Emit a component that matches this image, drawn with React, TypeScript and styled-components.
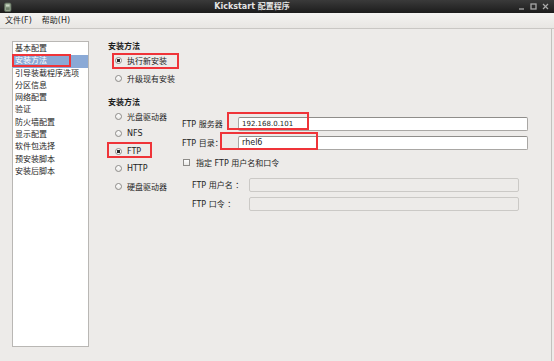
import React from "react";
import styled, { createGlobalStyle } from "styled-components";

const GlobalStyle = createGlobalStyle`
  html, body {
    margin: 0;
    padding: 0;
    background: #edebe9;
  }
  body {
    font-family: "DejaVu Sans", "Noto Sans CJK SC", sans-serif;
    font-size: 8px;
    color: #1e1e1e;
  }
  * {
    box-sizing: border-box;
  }
`;

const Window = styled.div`
  position: relative;
  width: 554px;
  height: 361px;
  display: flex;
  flex-direction: column;
  background: #edebe9;
  overflow: hidden;
`;

const TitleBar = styled.div`
  height: 13px;
  display: flex;
  align-items: center;
  padding: 0 5px 0 4px;
  background: linear-gradient(#3a3a3a, #1c1c1c);
`;

const TitleText = styled.div`
  flex: 1;
  text-align: center;
  padding-right: 26px;
  color: #e4e4e4;
  font-weight: bold;
  font-size: 8px;
  line-height: 13px;
  white-space: nowrap;
`;

const WinButtons = styled.div`
  display: flex;
  align-items: center;
  gap: 5px;
`;

const MenuBar = styled.div`
  height: 16px;
  display: flex;
  align-items: center;
  gap: 10px;
  padding-left: 5px;
  background: linear-gradient(#f4f3f1, #e8e6e3);
  border-bottom: 1px solid #c9c7c4;
`;

const MenuItem = styled.span`
  line-height: 15px;
  white-space: nowrap;
`;

const Body = styled.div`
  flex: 1;
  display: flex;
  align-items: flex-start;
  padding: 12px 0 0 12px;
  margin-right: 2px;
  border-right: 1px solid #c3c1be;
`;

const Sidebar = styled.div`
  width: 77px;
  height: 306px;
  padding-top: 1px;
  background: #fff;
  border: 1px solid #b9b7b4;
`;

const SideItem = styled.div<{ $active?: boolean }>`
  height: 12.3px;
  line-height: 12.3px;
  padding-left: 2px;
  white-space: nowrap;
  background: ${(p) => (p.$active ? "#8aa9d6" : "transparent")};
  color: ${(p) => (p.$active ? "#fff" : "#1e1e1e")};
`;

const Main = styled.div`
  margin-left: 19px;
  display: flex;
  flex-direction: column;
  flex: 1;
`;

const Heading = styled.div<{ $gap?: number }>`
  font-weight: bold;
  line-height: 11px;
  margin-top: ${(p) => p.$gap ?? 0}px;
`;

const RadioRow = styled.div`
  height: 17.4px;
  display: flex;
  align-items: center;
  gap: 5px;
  padding-left: 7px;
  white-space: nowrap;
`;

const RadioDot = styled.span<{ $on?: boolean }>`
  width: 7px;
  height: 7px;
  border-radius: 50%;
  border: 1px solid #8d8b88;
  background: ${(p) =>
    p.$on
      ? "radial-gradient(circle, #2a2a2a 0 1.6px, #fdfdfd 1.9px)"
      : "linear-gradient(#ffffff, #e9e8e6)"};
  flex: none;
`;

const SourceRow = styled.div`
  display: flex;
`;

const SourceList = styled.div`
  width: 74px;
  display: flex;
  flex-direction: column;
`;

const FtpForm = styled.div`
  padding-top: 9px;
  display: flex;
  flex-direction: column;
`;

const FieldRow = styled.div<{ $indent?: number; $gap?: number }>`
  display: flex;
  align-items: center;
  height: 14px;
  padding-left: ${(p) => p.$indent ?? 0}px;
  margin-top: ${(p) => p.$gap ?? 0}px;
`;

const FieldLabel = styled.span<{ $w: number }>`
  width: ${(p) => p.$w}px;
  white-space: nowrap;
  flex: none;
`;

const TextBox = styled.input<{ $w: number; $small?: boolean }>`
  width: ${(p) => p.$w}px;
  height: 14px;
  padding: 0 0 0 3px;
  margin: 0;
  font-family: inherit;
  font-size: ${(p) => (p.$small ? 7 : 8)}px;
  color: #1e1e1e;
  background: #fff;
  border: 1px solid #a9a7a4;
  border-top-color: #8f8d8a;
  border-radius: 2px;
  outline: none;

  &:disabled {
    background: #edebe9;
    border-color: #cbc9c6;
  }
`;

const CheckRow = styled.div`
  display: flex;
  align-items: center;
  gap: 6px;
  height: 16px;
  margin-top: 5px;
  padding-left: 1px;
  white-space: nowrap;
`;

const CheckBox = styled.span`
  width: 7px;
  height: 7px;
  border: 1px solid #8d8b88;
  background: linear-gradient(#ffffff, #e9e8e6);
  flex: none;
`;

const Mark = styled.div<{ $x: number; $y: number; $w: number; $h: number }>`
  position: absolute;
  left: ${(p) => p.$x}px;
  top: ${(p) => p.$y}px;
  width: ${(p) => p.$w}px;
  height: ${(p) => p.$h}px;
  border: 2px solid #ef3439;
  pointer-events: none;
`;

const AppIcon = () => (
  <svg width="8" height="10" viewBox="0 0 8 10">
    <rect x="0.5" y="1" width="6.5" height="8.5" rx="1.5" fill="#8fa08a" stroke="#5d6a5a" strokeWidth="0.8" />
    <rect x="2" y="2.5" width="3.5" height="2" fill="#c9d6c4" />
    <rect x="2" y="5.5" width="3.5" height="2.5" fill="#6f806b" />
  </svg>
);

const WinGlyph = ({ kind }: { kind: "min" | "max" | "close" }) => (
  <svg width="7" height="7" viewBox="0 0 7 7" stroke="#a9a9a9" strokeWidth="1.3" fill="none">
    {kind === "min" && <line x1="1" y1="6" x2="6" y2="6" />}
    {kind === "max" && <rect x="1" y="1" width="5" height="5" />}
    {kind === "close" && (
      <>
        <line x1="1" y1="1" x2="6" y2="6" />
        <line x1="6" y1="1" x2="1" y2="6" />
      </>
    )}
  </svg>
);

const sections = [
  "基本配置",
  "安装方法",
  "引导装载程序选项",
  "分区信息",
  "网络配置",
  "验证",
  "防火墙配置",
  "显示配置",
  "软件包选择",
  "预安装脚本",
  "安装后脚本",
];

const sources = ["光盘驱动器", "NFS", "FTP", "HTTP", "硬盘驱动器"];

export default function App() {
  return (
    <>
      <GlobalStyle />
      <Window>
        <TitleBar>
          <AppIcon />
          <TitleText>Kickstart 配置程序</TitleText>
          <WinButtons>
            <WinGlyph kind="min" />
            <WinGlyph kind="max" />
            <WinGlyph kind="close" />
          </WinButtons>
        </TitleBar>
        <MenuBar>
          <MenuItem>文件(F)</MenuItem>
          <MenuItem>帮助(H)</MenuItem>
        </MenuBar>
        <Body>
          <Sidebar>
            {sections.map((s) => (
              <SideItem key={s} $active={s === "安装方法"}>
                {s}
              </SideItem>
            ))}
          </Sidebar>
          <Main>
            <Heading>安装方法</Heading>
            <RadioRow>
              <RadioDot $on />
              执行新安装
            </RadioRow>
            <RadioRow>
              <RadioDot />
              升级现有安装
            </RadioRow>
            <Heading $gap={10}>安装方法</Heading>
            <SourceRow>
              <SourceList>
                {sources.map((s) => (
                  <RadioRow key={s}>
                    <RadioDot $on={s === "FTP"} />
                    {s}
                  </RadioRow>
                ))}
              </SourceList>
              <FtpForm>
                <FieldRow>
                  <FieldLabel $w={56}>FTP 服务器</FieldLabel>
                  <TextBox $w={290} $small readOnly value="192.168.0.101" />
                </FieldRow>
                <FieldRow $gap={5}>
                  <FieldLabel $w={56}>FTP 目录：</FieldLabel>
                  <TextBox $w={290} readOnly value="rhel6" />
                </FieldRow>
                <CheckRow>
                  <CheckBox />
                  指定 FTP 用户名和口令
                </CheckRow>
                <FieldRow $indent={10} $gap={7}>
                  <FieldLabel $w={57}>FTP 用户名 ：</FieldLabel>
                  <TextBox $w={270} disabled />
                </FieldRow>
                <FieldRow $indent={10} $gap={5}>
                  <FieldLabel $w={57}>FTP 口令 ：</FieldLabel>
                  <TextBox $w={270} disabled />
                </FieldRow>
              </FtpForm>
            </SourceRow>
          </Main>
        </Body>
        <Mark $x={12} $y={54} $w={59} $h={13} />
        <Mark $x={112} $y={53} $w={67} $h={16} />
        <Mark $x={107} $y={142} $w={45} $h={16} />
        <Mark $x={227} $y={112} $w={82} $h={18} />
        <Mark $x={220} $y={132} $w={98} $h={18} />
      </Window>
    </>
  );
}
